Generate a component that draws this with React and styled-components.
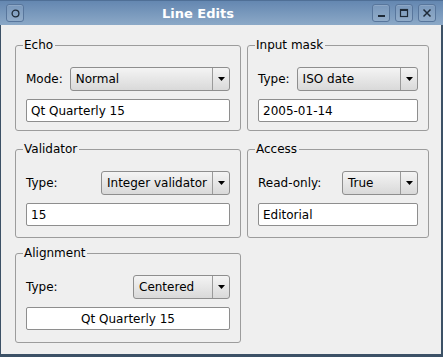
import React from "react";
import styled, { createGlobalStyle } from "styled-components";

const Global = createGlobalStyle`
  html, body {
    margin: 0;
    padding: 0;
    background: #efefef;
  }
  body {
    font-family: "DejaVu Sans", sans-serif;
    font-size: 12px;
    color: #000;
  }
`;

const Window = styled.div`
  width: 443px;
  height: 357px;
  box-sizing: border-box;
  display: flex;
  flex-direction: column;
  background: #3c5166;
  padding: 0 2px 3px 1px;
`;

const TitleBar = styled.div`
  height: 25px;
  margin: 0 -2px 0 -1px;
  display: flex;
  align-items: center;
  padding: 0 7px 0 6px;
  background: linear-gradient(#6487b1, #8ca9c7);
  border-top: 1px solid #4f6f96;
  box-sizing: border-box;
`;

const TitleText = styled.div`
  flex: 1;
  text-align: center;
  color: #fff;
  font-weight: bold;
  font-size: 13px;
  padding-top: 1px;
`;

const TitleButton = styled.div`
  box-sizing: border-box;
  width: 18px;
  height: 18px;
  border: 1px solid #58769c;
  border-radius: 3px;
  background: rgba(255, 255, 255, 0.1);
  box-shadow: inset 0 1px 0 rgba(255, 255, 255, 0.15);
  display: flex;
  align-items: center;
  justify-content: center;
  margin-left: ${(p) => (p.$gap ? "5px" : "0")};
`;

const Content = styled.div`
  flex: 1;
  background: #efefef;
  display: grid;
  grid-template-columns: 226px 182px;
  grid-template-rows: 96px 96px 97px;
  column-gap: 6px;
  row-gap: 8px;
  align-content: start;
  padding: 13px 0 0 14px;
`;

const Group = styled.fieldset`
  margin: 0 0 ${(p) => p.$after || 0}px 0;
  padding: 15px 10px 8px 10px;
  border: 1px solid #9c9c9c;
  border-radius: 3px;
  display: flex;
  flex-direction: column;
  gap: 8px;
  min-width: 0;
`;

const Legend = styled.legend`
  padding: 0 2px 0 1px;
  margin-left: -3px;
  line-height: 14px;
  color: #000;
`;

const Row = styled.div`
  display: flex;
  align-items: center;
  justify-content: space-between;
  gap: 7px;
`;

const Label = styled.span`
  white-space: nowrap;
`;

const Combo = styled.div`
  box-sizing: border-box;
  height: 24px;
  width: ${(p) => (p.$width ? `${p.$width}px` : "auto")};
  flex: ${(p) => (p.$width ? "none" : "1")};
  border: 1px solid #8e8e8e;
  border-radius: 3px;
  background: linear-gradient(#f4f4f4, #d9d9d9);
  display: flex;
  align-items: stretch;
`;

const ComboText = styled.div`
  flex: 1;
  display: flex;
  align-items: center;
  padding-left: 5px;
  white-space: nowrap;
  overflow: hidden;
`;

const ComboArrow = styled.div`
  width: 16px;
  border-left: 1px solid #9a9a9a;
  display: flex;
  align-items: center;
  justify-content: center;
`;

const Edit = styled.div`
  box-sizing: border-box;
  height: 23px;
  background: #fff;
  border: 1px solid #8e8e8e;
  border-radius: 2px;
  display: flex;
  align-items: center;
  justify-content: ${(p) => (p.$center ? "center" : "flex-start")};
  padding-left: ${(p) => (p.$center ? 0 : 4)}px;
`;

const Arrow = () => (
  <svg width="7" height="4" viewBox="0 0 7 4">
    <path d="M0 0h7L3.5 4z" fill="#000" />
  </svg>
);

const ComboBox = ({ value, width }) => (
  <Combo $width={width}>
    <ComboText>{value}</ComboText>
    <ComboArrow>
      <Arrow />
    </ComboArrow>
  </Combo>
);

const Box = ({ title, label, value, width, text, center, after }) => (
  <Group $after={after}>
    <Legend>{title}</Legend>
    <Row>
      <Label>{label}</Label>
      <ComboBox value={value} width={width} />
    </Row>
    <Edit $center={center}>{text}</Edit>
  </Group>
);

export default function App() {
  return (
    <>
      <Global />
      <Window>
        <TitleBar>
          <TitleButton>
            <svg width="9" height="9" viewBox="0 0 9 9">
              <circle cx="4.5" cy="4.5" r="3.4" fill="none" stroke="#1e2a38" strokeWidth="1.3" />
            </svg>
          </TitleButton>
          <TitleText>Line Edits</TitleText>
          <TitleButton>
            <svg width="9" height="9" viewBox="0 0 9 9">
              <rect x="1" y="6" width="7" height="2" fill="#1e2a38" />
            </svg>
          </TitleButton>
          <TitleButton $gap>
            <svg width="10" height="10" viewBox="0 0 10 10">
              <rect x="1.5" y="1.5" width="7" height="7" fill="none" stroke="#1e2a38" strokeWidth="1.2" />
              <rect x="1" y="1" width="8" height="2" fill="#1e2a38" />
            </svg>
          </TitleButton>
          <TitleButton $gap>
            <svg width="10" height="10" viewBox="0 0 10 10">
              <path d="M1.5 1.5l7 7M8.5 1.5l-7 7" stroke="#1e2a38" strokeWidth="1.5" />
            </svg>
          </TitleButton>
        </TitleBar>
        <Content>
          <Box title="Echo" label="Mode:" value="Normal" text="Qt Quarterly 15" after={3} />
          <Box title="Input mask" label="Type:" value="ISO date" text="2005-01-14" after={3} />
          <Box title="Validator" label="Type:" value="Integer validator" width={129} text="15" />
          <Box title="Access" label="Read-only:" value="True" width={76} text="Editorial" />
          <Box title="Alignment" label="Type:" value="Centered" width={97} text="Qt Quarterly 15" center />
        </Content>
      </Window>
    </>
  );
}
